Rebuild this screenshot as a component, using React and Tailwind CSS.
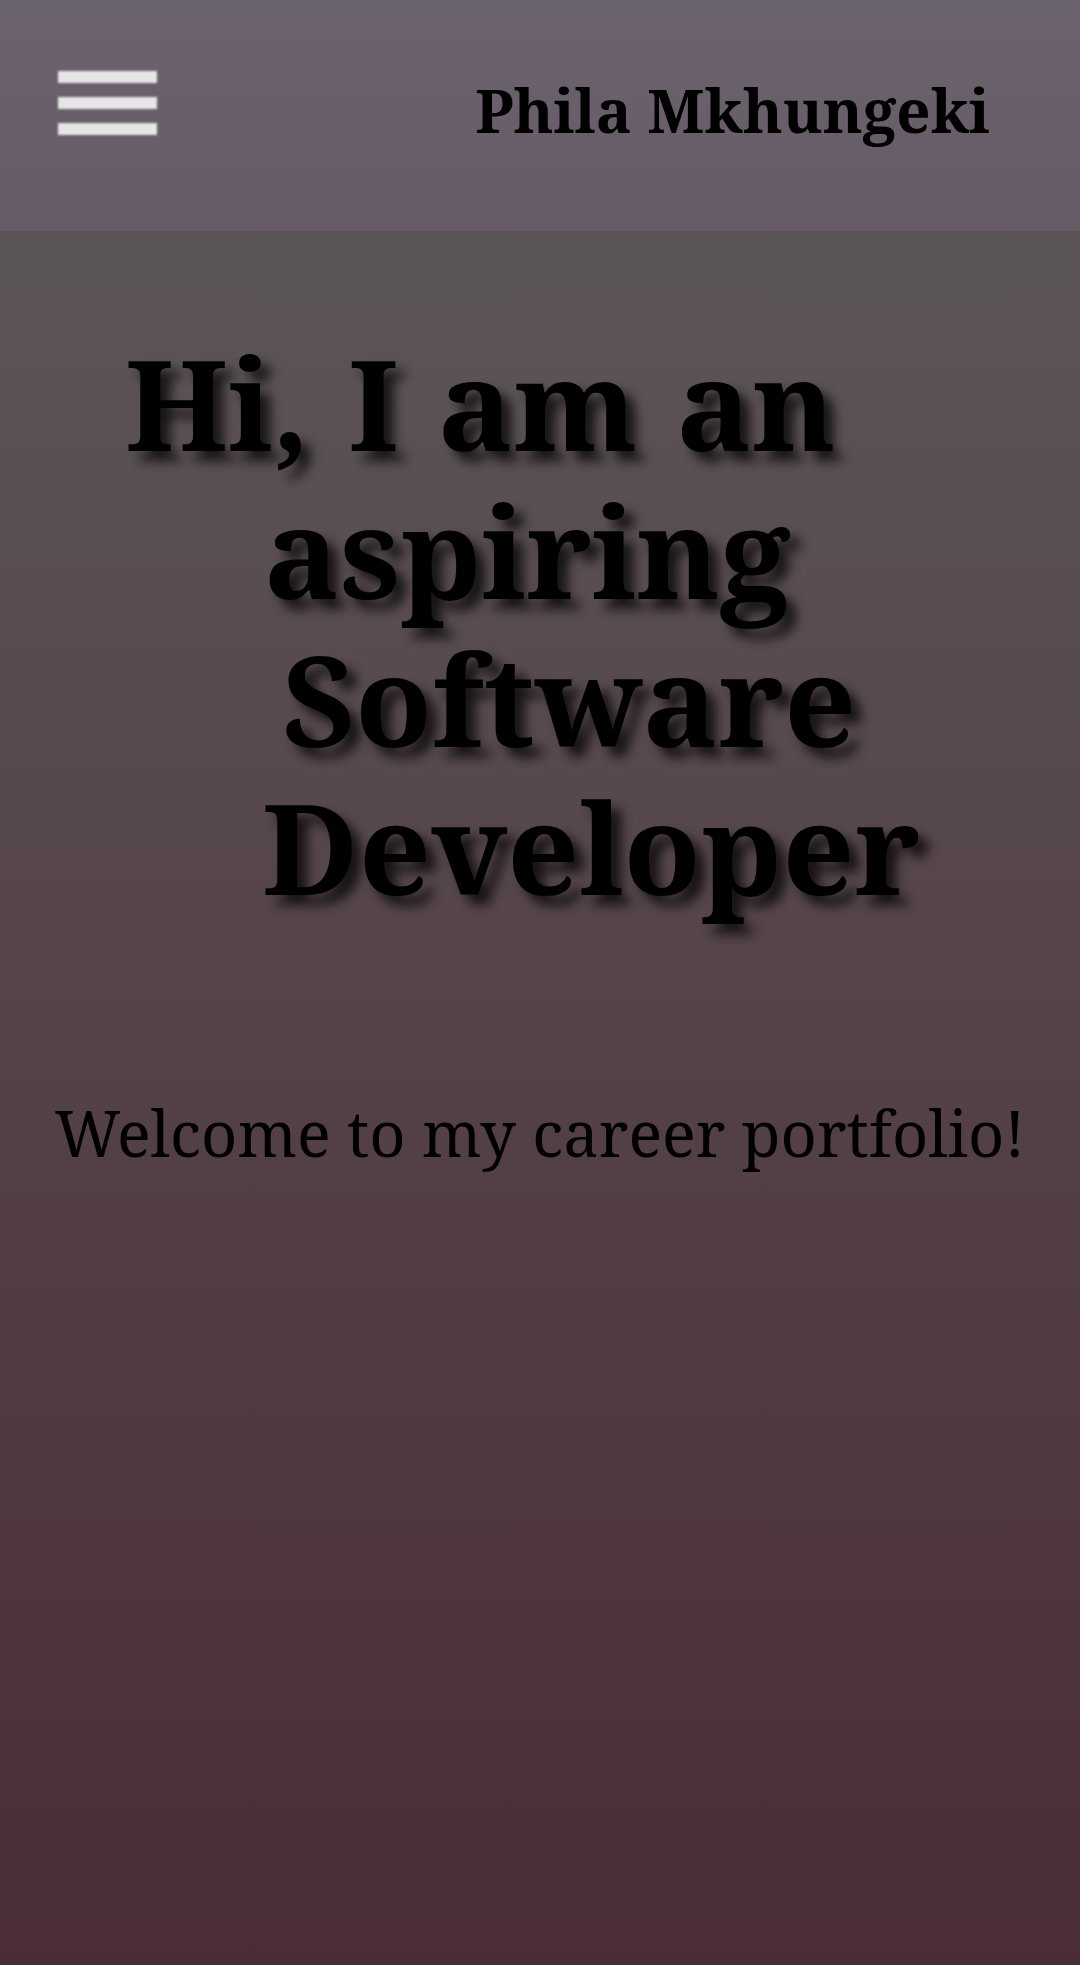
export default function App() {
  return (
    <div className="min-h-[1965px] w-full bg-gradient-to-b from-[#5e5b5c] to-[#4a2d35] font-['Noto_Serif','DejaVu_Serif',serif] text-black">
      <header className="flex h-[231px] items-center justify-between bg-gradient-to-b from-[#6c6370] to-[#665b66] pl-[58px] pr-[90px]">
        <div className="flex w-[99px] flex-col gap-[14px] pb-[26px]">
          <div className="h-[12px] bg-[#e6e6e6] blur-[0.8px]"></div>
          <div className="h-[12px] bg-[#e6e6e6] blur-[0.8px]"></div>
          <div className="h-[12px] bg-[#e6e6e6] blur-[0.8px]"></div>
        </div>
        <div className="pb-[12px] text-[60px] font-bold leading-none">Phila Mkhungeki</div>
      </header>
      <h1 className="mt-[97px] flex flex-col items-start text-[126px] font-bold leading-[148px] [text-shadow:10px_10px_12px_rgba(0,0,0,0.75)]">
        <span className="ml-[125px] [word-spacing:6px]">Hi, I am an</span>
        <span className="ml-[264px]">aspiring</span>
        <span className="ml-[282px]">Software</span>
        <span className="ml-[262px]">Developer</span>
      </h1>
      <p className="mt-[181px] text-center text-[63px] leading-none">Welcome to my career portfolio!</p>
    </div>
  );
}
